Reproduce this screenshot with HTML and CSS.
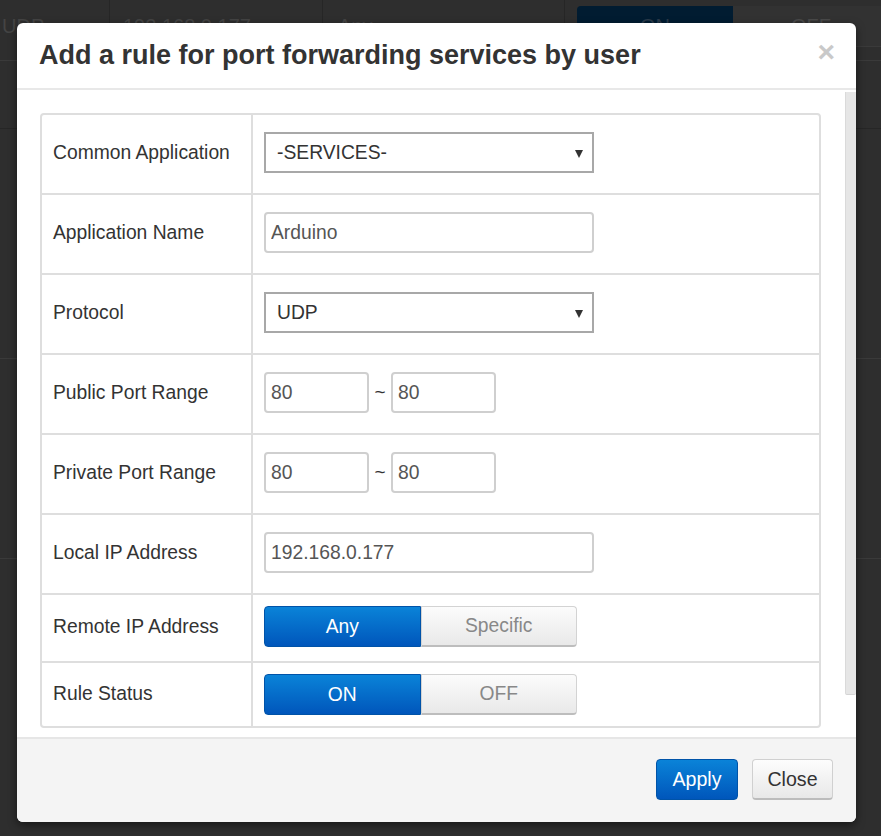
FILE: index.html
```html
<!DOCTYPE html>
<html lang="en">
<head>
<meta charset="utf-8">
<title>Port forwarding rule</title>
<link rel="stylesheet" href="styles.css">
</head>
<body>
<div class="page">
  <div class="bg-row first">
    <div class="bg-cell c1">UDP</div>
    <div class="bg-cell c2">192.168.0.177</div>
    <div class="bg-cell c3">Any</div>
    <div class="bg-cell c4">
      <div class="bg-toggle"><span class="bg-on">ON</span><span class="bg-off">OFF</span></div>
    </div>
  </div>
  <div class="bg-row second"></div>
  <div class="bg-row third"></div>
  <div class="bg-row fourth"></div>
</div>

<div class="modal">
  <div class="modal-header">
    <h4 class="modal-title">Add a rule for port forwarding services by user</h4>
    <span class="close">×</span>
  </div>
  <div class="modal-body-wrap">
    <div class="modal-body">
      <div class="rule-table">
        <div class="row">
          <div class="label">Common Application</div>
          <div class="value">
            <div class="select"><span>-SERVICES-</span><span class="arrow"></span></div>
          </div>
        </div>
        <div class="row">
          <div class="label">Application Name</div>
          <div class="value"><input class="text wide" type="text" value="Arduino"></div>
        </div>
        <div class="row">
          <div class="label">Protocol</div>
          <div class="value">
            <div class="select"><span>UDP</span><span class="arrow"></span></div>
          </div>
        </div>
        <div class="row">
          <div class="label">Public Port Range</div>
          <div class="value">
            <input class="text port" type="text" value="80"><span class="tilde">~</span><input class="text port" type="text" value="80">
          </div>
        </div>
        <div class="row">
          <div class="label">Private Port Range</div>
          <div class="value">
            <input class="text port" type="text" value="80"><span class="tilde">~</span><input class="text port" type="text" value="80">
          </div>
        </div>
        <div class="row">
          <div class="label">Local IP Address</div>
          <div class="value"><input class="text wide" type="text" value="192.168.0.177"></div>
        </div>
        <div class="row short">
          <div class="label">Remote IP Address</div>
          <div class="value">
            <div class="seg"><span class="seg-btn active">Any</span><span class="seg-btn">Specific</span></div>
          </div>
        </div>
        <div class="row last">
          <div class="label">Rule Status</div>
          <div class="value">
            <div class="seg"><span class="seg-btn active">ON</span><span class="seg-btn">OFF</span></div>
          </div>
        </div>
      </div>
    </div>
    <div class="scrollbar"><div class="thumb"></div></div>
  </div>
  <div class="modal-footer">
    <button class="btn primary">Apply</button>
    <button class="btn default">Close</button>
  </div>
</div>
</body>
</html>
```

FILE: styles.css
```css
* { box-sizing: border-box; }

html, body {
  margin: 0;
  padding: 0;
}

body {
  width: 881px;
  height: 836px;
  overflow: hidden;
  background: #2e2e2e;
  font-family: "Liberation Sans", Arial, sans-serif;
  color: #333;
  position: relative;
}

/* dimmed page behind the dialog */
.page {
  display: flex;
  flex-direction: column;
}

.bg-row {
  display: grid;
  grid-template-columns: 110px 213px 242px 1fr;
  border-bottom: 1px solid #3a3a3a;
}

.bg-row.first { height: 61px; }
.bg-row.second { height: 68px; border-bottom-color: #262626; }
.bg-row.third { height: 230px; }
.bg-row.fourth { height: 200px; }

.bg-cell {
  border-right: 1px solid #262626;
  color: #444;
  font-size: 20px;
  padding: 15px 0 0 2px;
}

.bg-cell.c2 { padding-left: 13px; }
.bg-cell.c3 { padding-left: 15px; }
.bg-cell.c4 { border-right: none; padding: 6px 0 0 12px; }

.bg-toggle {
  display: flex;
  height: 41px;
  width: 320px;
  border-bottom: 1px solid #3a3a3a;
}

.bg-on, .bg-off {
  width: 156px;
  display: flex;
  align-items: center;
  justify-content: center;
  color: #2a3a4a;
}

.bg-on { background: #011c31; border-radius: 4px 0 0 4px; }
.bg-off { background: #323232; color: #4a4a4a; }

/* modal */
.modal {
  position: absolute;
  left: 17px;
  top: 23px;
  width: 839px;
  height: 799px;
  background: #fff;
  border-radius: 6px;
  box-shadow: 0 3px 9px rgba(0, 0, 0, 0.5);
  display: flex;
  flex-direction: column;
  overflow: hidden;
}

.modal-header {
  height: 67px;
  flex: none;
  border-bottom: 2px solid #e8e8e8;
  padding: 17px 21px 0 22px;
  display: flex;
  justify-content: space-between;
  align-items: flex-start;
}

.modal-title {
  margin: 0;
  font-size: 27px;
  line-height: 31px;
  font-weight: bold;
  color: #333;
}

.close {
  font-size: 30px;
  line-height: 30px;
  font-weight: bold;
  color: #c9c9c9;
  margin-top: -3px;
}

.modal-body-wrap {
  height: 647px;
  flex: none;
  display: flex;
  overflow: hidden;
}

.modal-body {
  flex: 1;
  padding: 23px 24px 0 23px;
}

.scrollbar {
  width: 11px;
  flex: none;
  background: #fff;
  padding-top: 2px;
}

.thumb {
  height: 603px;
  background: #e6e6e6;
  border-left: 1px solid #dadada;
  border-bottom: 1px solid #d4d4d4;
  border-radius: 0 0 2px 2px;
}

/* rule table */
.rule-table {
  border: 2px solid #dedede;
  border-radius: 4px;
  width: 781px;
}

.row {
  display: grid;
  grid-template-columns: 211px 1fr;
  height: 80px;
  border-bottom: 2px solid #dedede;
}

.row.short { height: 68px; }
.row.last { height: 63px; border-bottom: none; }

.label {
  border-right: 2px solid #dedede;
  padding-left: 11px;
  display: flex;
  align-items: center;
  font-size: 19.3px;
  color: #333;
  padding-bottom: 2px;
}

.value {
  padding-left: 11px;
  display: flex;
  align-items: center;
}

.select {
  width: 330px;
  height: 41px;
  border: 2px solid #a8a8a8;
  padding: 0 9px 0 11px;
  display: flex;
  align-items: center;
  justify-content: space-between;
  font-size: 19.3px;
  color: #333;
  margin-top: -3px;
}

.arrow {
  width: 0;
  height: 0;
  border-left: 4.5px solid transparent;
  border-right: 4.5px solid transparent;
  border-top: 8px solid #333;
  margin-top: 2px;
}

.text {
  height: 41px;
  border: 2px solid #cfcfcf;
  border-radius: 4px;
  padding: 0 5px;
  font-family: "Liberation Sans", Arial, sans-serif;
  font-size: 19.3px;
  color: #555;
  background: #fff;
  outline: none;
  margin: -3px 0 0 0;
}

.text.wide { width: 330px; }
.text.port { width: 105px; }

.tilde {
  width: 22px;
  text-align: center;
  font-size: 19px;
  color: #333;
  margin-top: -5px;
}

.seg {
  display: flex;
  width: 313px;
  height: 41px;
  margin-top: -3px;
}

.row.last .seg { margin-top: 0; }

.seg-btn {
  flex: 1;
  display: flex;
  align-items: center;
  justify-content: center;
  font-size: 19.3px;
  color: #888;
  background: linear-gradient(#fcfcfc, #e9e9e9);
  border: 1px solid #d3d3d3;
  border-bottom: 2px solid #bdbdbd;
  border-radius: 0 4px 4px 0;
}

.seg-btn.active {
  color: #fff;
  background: linear-gradient(#0a83d8, #0056bb);
  border: 1px solid #0053a8;
  border-radius: 4px 0 0 4px;
}

/* footer */
.modal-footer {
  flex: 1;
  border-top: 2px solid #e6e6e6;
  background: #f4f4f4;
  display: flex;
  justify-content: flex-end;
  align-items: center;
  gap: 14px;
  padding: 0 23px 2px 0;
}

.btn {
  height: 41px;
  border-radius: 4px;
  font-family: "Liberation Sans", Arial, sans-serif;
  font-size: 19.6px;
  padding: 0;
  margin: 0;
}

.btn.primary {
  width: 82px;
  color: #fff;
  background: linear-gradient(#0a83d8, #0056bb);
  border: 1px solid #0053a8;
}

.btn.default {
  width: 81px;
  color: #333;
  background: linear-gradient(#fdfdfd, #e8e8e8);
  border: 1px solid #d0d0d0;
  border-bottom: 2px solid #bcbcbc;
}
```
